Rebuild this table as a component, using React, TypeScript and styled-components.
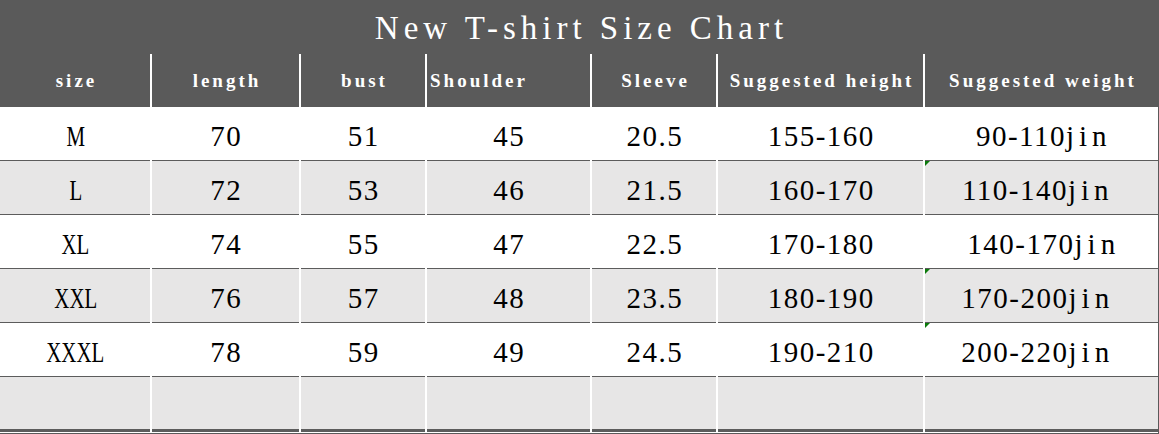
import React from "react";
import styled, { createGlobalStyle } from "styled-components";

const GlobalStyle = createGlobalStyle`
  html, body { margin: 0; padding: 0; background: #ffffff; }
  * { box-sizing: border-box; }
`;

const DARK = "#5a5a5a";
const LINE = "#5c5c5c";
const SHADE = "#e7e6e6";
const COLS = "150px 147px 124px 163px 124px 205px 233px";

const Sheet = styled.div`
  width: 1159px;
  display: flex;
  flex-direction: column;
  background: #ffffff;
  border-right: 1px solid ${DARK};
  border-bottom: 1px solid ${DARK};
  padding-bottom: 1px;
  font-family: "Liberation Serif", "Times New Roman", serif;
`;

const Title = styled.div`
  height: 54px;
  background: ${DARK};
  color: #ffffff;
  display: flex;
  align-items: center;
  justify-content: center;
  padding-top: 2px;
  padding-left: 5px;
  font-size: 33px;
  letter-spacing: 5px;
  white-space: pre;
`;

const Row = styled.div`
  display: grid;
  grid-template-columns: ${COLS};
  column-gap: 2px;
`;

const HeadCell = styled.div<{ $align?: "left" | "center" }>`
  height: 53px;
  background: ${DARK};
  color: #ffffff;
  display: flex;
  align-items: center;
  justify-content: ${(p) => (p.$align === "left" ? "flex-start" : "center")};
  padding-left: 3px;
  font-size: 19px;
  font-weight: bold;
  letter-spacing: 3px;
  white-space: pre;
`;

const Cell = styled.div<{ $shade?: boolean; $last?: boolean; $trail?: boolean; $flag?: boolean }>`
  position: relative;
  height: ${(p) => (p.$last ? "55px" : "54px")};
  background: ${(p) => (p.$shade ? SHADE : "#ffffff")};
  border-bottom: ${(p) => (p.$last ? "3px" : "1px")} solid ${LINE};
  display: flex;
  align-items: center;
  justify-content: center;
  padding-top: 5px;
  padding-left: 1.5px;
  padding-right: ${(p) => (p.$trail ? "12px" : "0")};
  color: #000000;
  font-size: 29px;
  letter-spacing: 1.5px;
  white-space: pre;

  ${(p) =>
    p.$flag
      ? `
  &::before {
    content: "";
    position: absolute;
    top: 0;
    left: 0;
    width: 0;
    height: 0;
    border-top: 5px solid #0b7a0b;
    border-right: 5px solid transparent;
  }`
      : ""}
`;

const Narrow = styled.span`
  display: inline-block;
  letter-spacing: 0;
  transform: scaleX(0.72);
`;

const Unit = styled.span`
  letter-spacing: 5px;
  margin-right: -3px;
`;

type SizeRow = {
  size: string;
  length: string;
  bust: string;
  shoulder: string;
  sleeve: string;
  height: string;
  weight: string;
  trail: boolean;
  flag: boolean;
};

const rows: SizeRow[] = [
  { size: "M", length: "70", bust: "51", shoulder: "45", sleeve: "20.5", height: "155-160", weight: "90-110", trail: false, flag: false },
  { size: "L", length: "72", bust: "53", shoulder: "46", sleeve: "21.5", height: "160-170", weight: "110-140", trail: true, flag: true },
  { size: "XL", length: "74", bust: "55", shoulder: "47", sleeve: "22.5", height: "170-180", weight: "140-170", trail: false, flag: false },
  { size: "XXL", length: "76", bust: "57", shoulder: "48", sleeve: "23.5", height: "180-190", weight: "170-200", trail: true, flag: true },
  { size: "XXXL", length: "78", bust: "59", shoulder: "49", sleeve: "24.5", height: "190-210", weight: "200-220", trail: true, flag: true },
];

const headers: { label: string; align?: "left" | "center" }[] = [
  { label: "size" },
  { label: "length" },
  { label: "bust" },
  { label: "Shoulder", align: "left" },
  { label: "Sleeve" },
  { label: "Suggested height" },
  { label: "Suggested weight" },
];

export default function App() {
  return (
    <>
      <GlobalStyle />
      <Sheet>
        <Title>New T-shirt Size Chart</Title>
        <Row>
          {headers.map((h) => (
            <HeadCell key={h.label} $align={h.align}>
              {h.label}
            </HeadCell>
          ))}
        </Row>
        {rows.map((r, i) => {
          const shade = i % 2 === 1;
          return (
            <Row key={r.size}>
              <Cell $shade={shade}>
                <Narrow>{r.size}</Narrow>
              </Cell>
              <Cell $shade={shade}>{r.length}</Cell>
              <Cell $shade={shade}>{r.bust}</Cell>
              <Cell $shade={shade}>{r.shoulder}</Cell>
              <Cell $shade={shade}>{r.sleeve}</Cell>
              <Cell $shade={shade}>{r.height}</Cell>
              <Cell $shade={shade} $trail={r.trail} $flag={r.flag}>
                {r.weight}
                <Unit>jin</Unit>
              </Cell>
            </Row>
          );
        })}
        <Row>
          {headers.map((h) => (
            <Cell key={h.label} $shade $last />
          ))}
        </Row>
      </Sheet>
    </>
  );
}
